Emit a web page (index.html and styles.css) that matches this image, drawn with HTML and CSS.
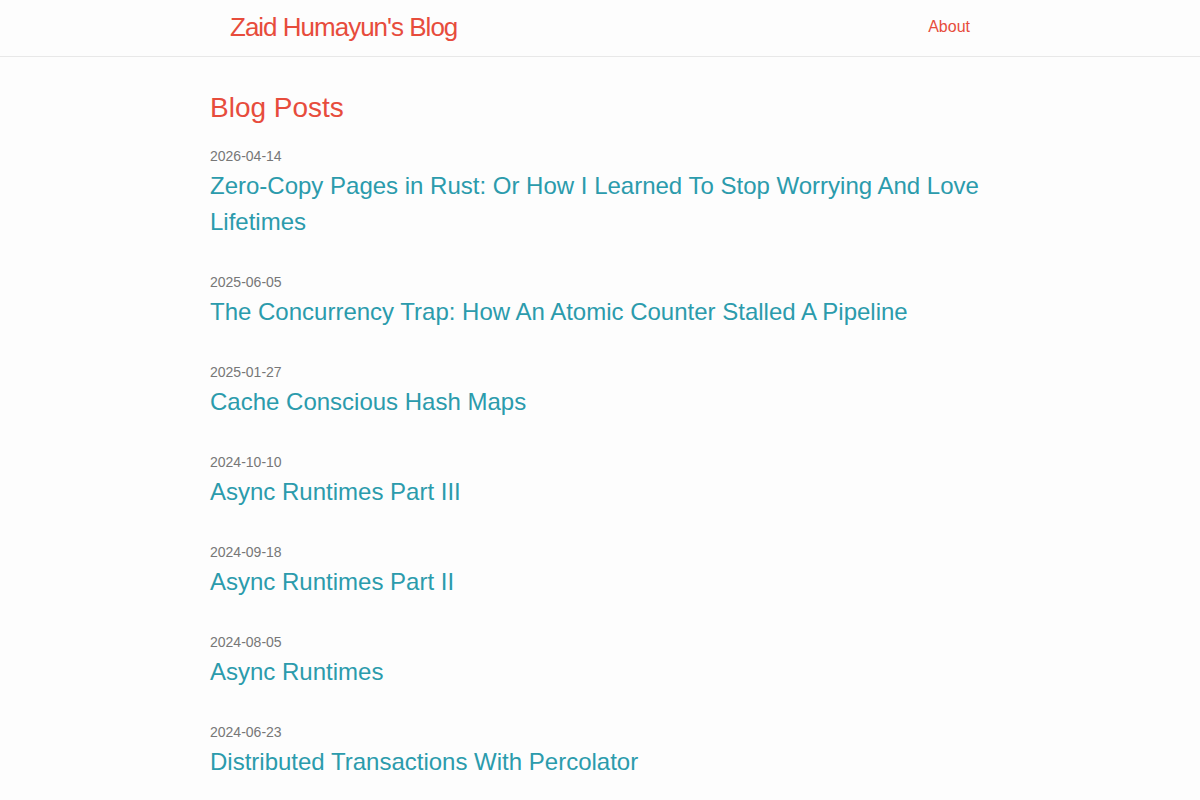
FILE: index.html
```html
<!DOCTYPE html>
<html lang="en">
<head>
  <meta charset="UTF-8">
  <meta name="viewport" content="width=device-width, initial-scale=1.0">
  <title>Zaid Humayun's Blog</title>
  <link rel="stylesheet" href="styles.css">
</head>
<body>
  <header class="site-header">
    <div class="wrapper header-inner">
      <a href="/" class="site-title">Zaid Humayun's Blog</a>
      <nav class="site-nav">
        <a href="/about/" class="nav-link">About</a>
      </nav>
    </div>
  </header>

  <main class="wrapper page-content">
    <h1 class="page-heading">Blog Posts</h1>

    <ul class="post-list">
      <li class="post">
        <span class="post-meta">2026-04-14</span>
        <a href="#" class="post-link">Zero-Copy Pages in Rust: Or How I Learned To Stop Worrying And Love Lifetimes</a>
      </li>
      <li class="post">
        <span class="post-meta">2025-06-05</span>
        <a href="#" class="post-link">The Concurrency Trap: How An Atomic Counter Stalled A Pipeline</a>
      </li>
      <li class="post">
        <span class="post-meta">2025-01-27</span>
        <a href="#" class="post-link">Cache Conscious Hash Maps</a>
      </li>
      <li class="post">
        <span class="post-meta">2024-10-10</span>
        <a href="#" class="post-link">Async Runtimes Part III</a>
      </li>
      <li class="post">
        <span class="post-meta">2024-09-18</span>
        <a href="#" class="post-link">Async Runtimes Part II</a>
      </li>
      <li class="post">
        <span class="post-meta">2024-08-05</span>
        <a href="#" class="post-link">Async Runtimes</a>
      </li>
      <li class="post">
        <span class="post-meta">2024-06-23</span>
        <a href="#" class="post-link">Distributed Transactions With Percolator</a>
      </li>
    </ul>
  </main>
</body>
</html>
```

FILE: styles.css
```css
body {
  font-family: "Liberation Sans", Arial, Helvetica, sans-serif;
  color: #333;
  background: #fdfdfd;
  margin: 0;
}
a {
  text-decoration: none;
}
.wrapper {
  max-width: 780px;
  margin: 0 auto;
}
.site-header {
  border-bottom: 1px solid #e8e8e8;
  height: 56px;
}
.header-inner {
  display: flex;
  justify-content: space-between;
  align-items: center;
  height: 54px;
  padding: 0 20px;
  box-sizing: border-box;
}
.site-title {
  color: #e74c3c;
  font-size: 26px;
  letter-spacing: -1px;
  line-height: 54px;
}
.nav-link {
  color: #e74c3c;
  font-size: 16px;
}
.page-content {
  padding-top: 33px;
}
.page-heading {
  color: #e74c3c;
  font-size: 28px;
  font-weight: normal;
  margin: 0 0 20px;
  line-height: 36px;
}
.post-list {
  list-style: none;
  margin: 0;
  padding: 0;
}
.post {
  margin-bottom: 32px;
}
.post-meta {
  display: block;
  color: #777;
  font-size: 14px;
  line-height: 20px;
  margin-bottom: 2px;
}
.post-link {
  display: block;
  color: #2b9bac;
  font-size: 24px;
  line-height: 36px;
}
```
